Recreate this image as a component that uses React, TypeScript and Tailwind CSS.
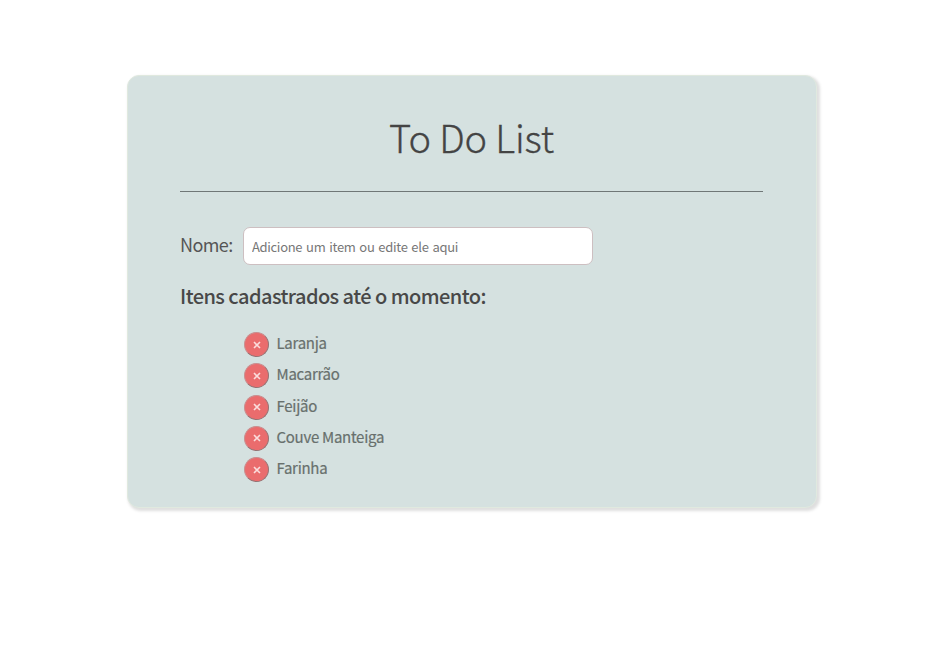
const items = ["Laranja", "Macarrão", "Feijão", "Couve Manteiga", "Farinha"];

export default function App() {
  return (
    <div className="min-h-[645px] bg-white pt-[74.5px] pl-[126.5px] font-['Noto_Sans_CJK_SC',sans-serif]">
      <main className="h-[433px] w-[690px] rounded-xl border border-[#e0e9df] bg-[#d5e1e0] pr-[53px] pl-[52px] shadow-[2px_2px_3px_1px_rgba(0,0,0,0.13)]">
        <h1 className="mt-[33px] h-[83.5px] border-b border-[#707777] pl-px text-center text-[38px] leading-[56px] font-light tracking-[-0.15px] text-[#444] [-webkit-text-stroke:0.3px_#444]">
          To Do List
        </h1>
        <div className="mt-[35px] flex h-[38px] items-center">
          <label htmlFor="nome" className="-mt-1 w-[63.4px] pl-[0.5px] text-lg leading-6 tracking-[-0.6px] whitespace-nowrap text-[#555]">Nome:</label>
          <input
            id="nome"
            placeholder="Adicione um item ou edite ele aqui"
            className="h-[38px] w-[350px] rounded-[7px] border border-[#cdbfc1] bg-white px-2 text-[13px] tracking-[-0.3px] [word-spacing:1.2px] placeholder:text-[#777]"
          />
        </div>
        <h2 className="mt-[15px] pl-[0.5px] text-xl leading-8 font-medium tracking-[-0.55px] whitespace-nowrap text-[#484848]">Itens cadastrados até o momento:</h2>
        <ul className="mt-5 ml-[64.5px]">
          {items.map((item) => (
            <li key={item} className="flex h-[31.25px] items-start">
              <button aria-label={`Remover ${item}`} className="flex size-[25px] items-center justify-center rounded-full border border-t-[#c98f90] border-r-[#947576] border-b-[#947576] border-l-[#c98f90] bg-[#ea6c6d]">
                <svg viewBox="0 0 8 8" className="size-2 stroke-[#fbdcdc]" strokeWidth="1.6"><path d="M1 1 7 7M7 1 1 7" /></svg>
              </button>
              <span className="ml-[7.5px] text-[15px] leading-[21px] tracking-[-0.28px] whitespace-nowrap text-[#68706d] [-webkit-text-stroke:0.2px_#68706d]">{item}</span>
            </li>
          ))}
        </ul>
      </main>
    </div>
  );
}
